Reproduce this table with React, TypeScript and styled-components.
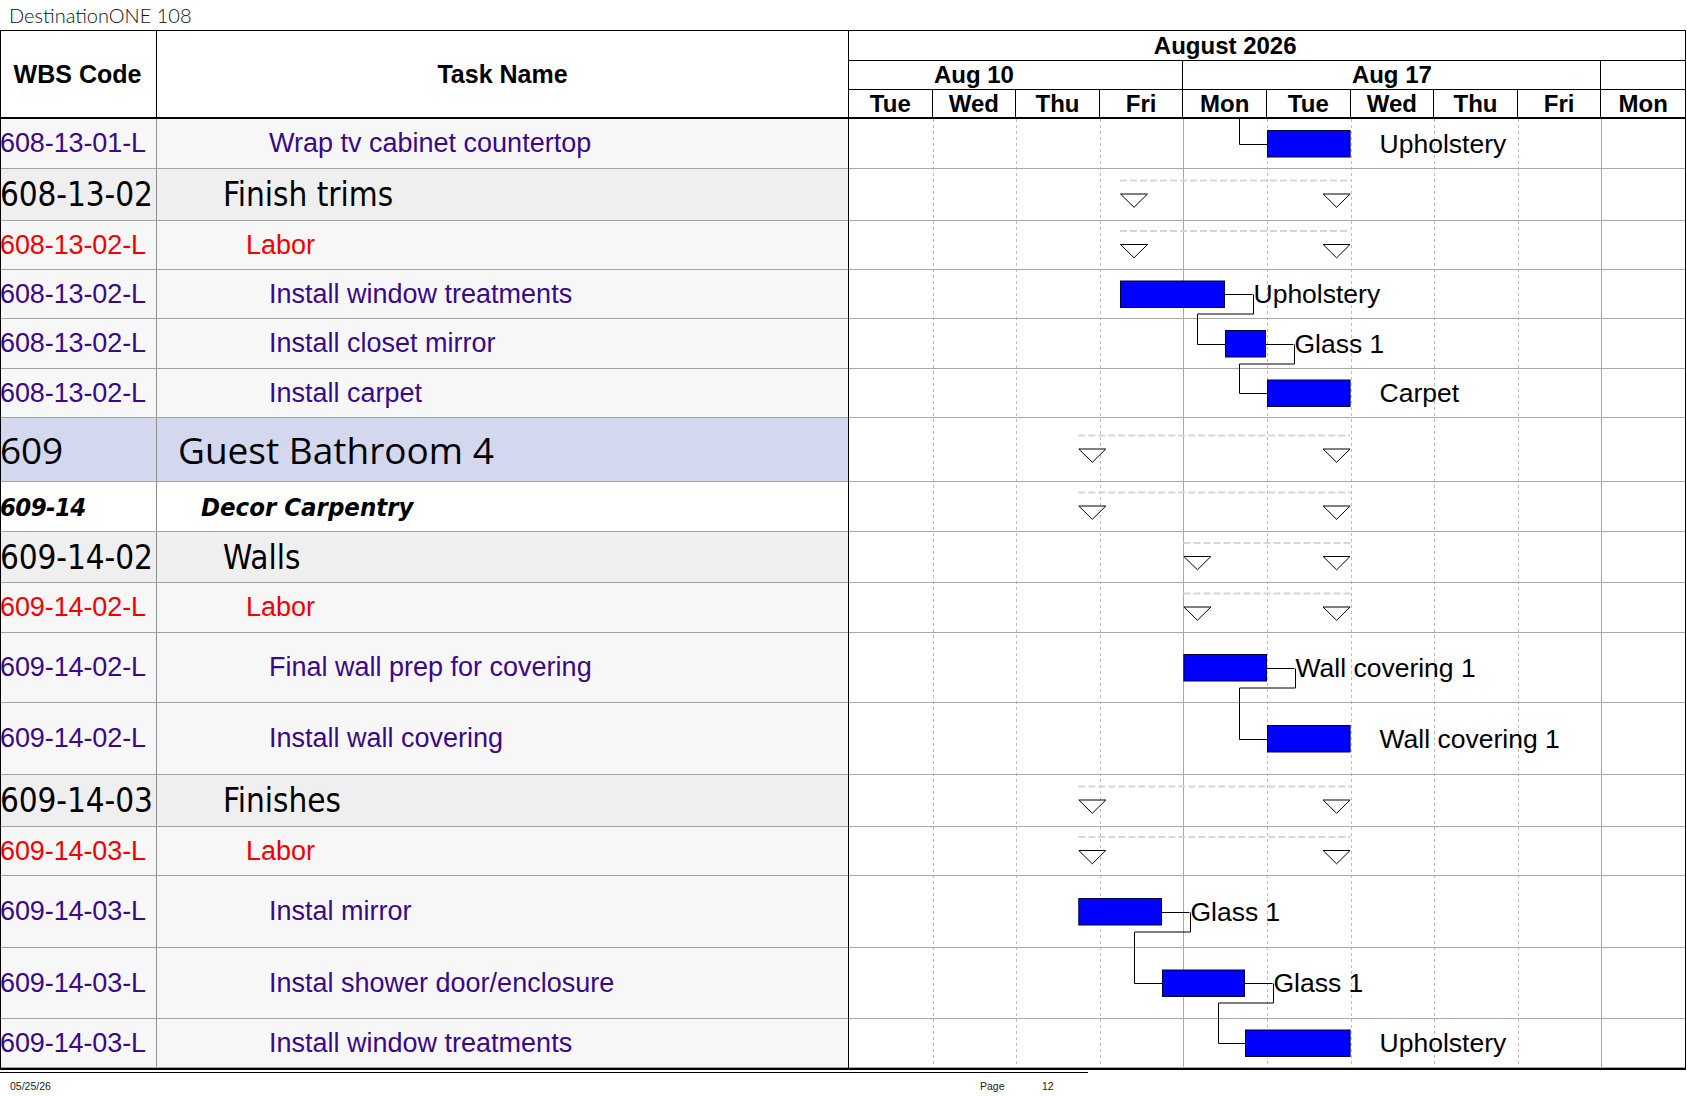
import styled, { createGlobalStyle } from 'styled-components';

type Kind = 'task' | 'labor' | 'summary' | 'group' | 'phase';

type Bar = { x1: number; x2: number; label: string; stub?: boolean };
type Span = { x1: number; x2: number };

type TaskRow = {
  code: string;
  name: string;
  kind: Kind;
  h: number;
  bar?: Bar;
  summary?: Span;
};

const DAY = 83.6;
const CHART_W = 836;

const rows: TaskRow[] = [
  { code: '608-13-01-L', name: 'Wrap tv cabinet countertop', kind: 'task', h: 50, bar: { x1: 418, x2: 501.6, label: 'Upholstery' } },
  { code: '608-13-02', name: 'Finish trims', kind: 'summary', h: 52, summary: { x1: 271, x2: 501.6 } },
  { code: '608-13-02-L', name: 'Labor', kind: 'labor', h: 49, summary: { x1: 271, x2: 501.6 } },
  { code: '608-13-02-L', name: 'Install window treatments', kind: 'task', h: 49, bar: { x1: 271, x2: 376, label: 'Upholstery', stub: true } },
  { code: '608-13-02-L', name: 'Install closet mirror', kind: 'task', h: 50, bar: { x1: 376, x2: 417, label: 'Glass 1', stub: true } },
  { code: '608-13-02-L', name: 'Install carpet', kind: 'task', h: 49, bar: { x1: 418, x2: 501.6, label: 'Carpet' } },
  { code: '609', name: 'Guest Bathroom 4', kind: 'group', h: 64, summary: { x1: 229.3, x2: 501.6 } },
  { code: '609-14', name: 'Decor Carpentry', kind: 'phase', h: 50, summary: { x1: 229.3, x2: 501.6 } },
  { code: '609-14-02', name: 'Walls', kind: 'summary', h: 51, summary: { x1: 334.4, x2: 501.6 } },
  { code: '609-14-02-L', name: 'Labor', kind: 'labor', h: 50, summary: { x1: 334.4, x2: 501.6 } },
  { code: '609-14-02-L', name: 'Final wall prep for covering', kind: 'task', h: 70, bar: { x1: 334.4, x2: 418, label: 'Wall covering 1', stub: true } },
  { code: '609-14-02-L', name: 'Install wall covering', kind: 'task', h: 72, bar: { x1: 418, x2: 501.6, label: 'Wall covering 1' } },
  { code: '609-14-03', name: 'Finishes', kind: 'summary', h: 52, summary: { x1: 229.3, x2: 501.6 } },
  { code: '609-14-03-L', name: 'Labor', kind: 'labor', h: 49, summary: { x1: 229.3, x2: 501.6 } },
  { code: '609-14-03-L', name: 'Instal mirror', kind: 'task', h: 72, bar: { x1: 229.3, x2: 313, label: 'Glass 1', stub: true } },
  { code: '609-14-03-L', name: 'Instal shower door/enclosure', kind: 'task', h: 71, bar: { x1: 313, x2: 396, label: 'Glass 1', stub: true } },
  { code: '609-14-03-L', name: 'Install window treatments', kind: 'task', h: 49, bar: { x1: 396, x2: 501.6, label: 'Upholstery' } },
];

// finish-to-start links between neighbouring rows, turnX is where the line doubles back
const links = [
  { from: 3, turnX: 348.3 },
  { from: 4, turnX: 390.3 },
  { from: 10, turnX: 390 },
  { from: 14, turnX: 285.3 },
  { from: 15, turnX: 369.3 },
];

const days = ['Tue', 'Wed', 'Thu', 'Fri', 'Mon', 'Tue', 'Wed', 'Thu', 'Fri', 'Mon'];

const kinds: Record<Kind, { bg: string; color: string; font: string; size: number; weight: number; italic: boolean; indent: number }> = {
  task: { bg: '#f7f7f7', color: '#3a0888', font: '"Liberation Sans", Arial, sans-serif', size: 27, weight: 400, italic: false, indent: 112 },
  labor: { bg: '#f7f7f7', color: '#f00000', font: '"Liberation Sans", Arial, sans-serif', size: 27, weight: 400, italic: false, indent: 89 },
  summary: { bg: '#efefef', color: '#000', font: '"DejaVu Sans Condensed", "Noto Sans", sans-serif', size: 33, weight: 400, italic: false, indent: 66 },
  group: { bg: '#d3d8ef', color: '#000', font: '"Open Sans", "Noto Sans", sans-serif', size: 37, weight: 400, italic: false, indent: 21 },
  phase: { bg: '#ffffff', color: '#000', font: '"DejaVu Sans Condensed", "Noto Sans", sans-serif', size: 25.5, weight: 700, italic: true, indent: 44 },
};

export default function App() {
  const tops: number[] = [];
  let acc = 0;
  for (const r of rows) {
    tops.push(acc);
    acc += r.h;
  }
  const totalH = acc;
  const mid = (i: number) => tops[i] + (rows[i].h - 1) / 2;

  return (
    <Page>
      <GlobalStyle />
      <Title>DestinationONE 108</Title>
      <Sheet>
        <Header>
          <HeadCell>WBS Code</HeadCell>
          <HeadCell $wide>Task Name</HeadCell>
          <GanttHead>
            <MonthBand>August 2026</MonthBand>
            <WeekBand>
              <WeekCell $span={4} $shift={DAY}>Aug 10</WeekCell>
              <WeekCell $span={5}>Aug 17</WeekCell>
              <WeekCell $span={1} $last />
            </WeekBand>
            <DayBand>
              {days.map((d, i) => (
                <DayCell key={i} $last={i === days.length - 1}>
                  {d}
                </DayCell>
              ))}
            </DayBand>
          </GanttHead>
        </Header>

        <Body>
          <Table>
            {rows.map((r, i) => (
              <Row key={i} $h={r.h} $kind={r.kind}>
                <CodeCell $kind={r.kind}>{r.code}</CodeCell>
                <NameCell $kind={r.kind}>{r.name}</NameCell>
              </Row>
            ))}
          </Table>

          <Chart width={CHART_W} height={totalH} viewBox={`0 0 ${CHART_W} ${totalH}`}>
            {Array.from({ length: 9 }, (_, k) => {
              const i = k + 1;
              const x = Math.round(i * DAY) + 0.5;
              const week = i === 4 || i === 9;
              return (
                <line
                  key={`d${i}`}
                  x1={x}
                  x2={x}
                  y1={0}
                  y2={totalH}
                  stroke={week ? '#a9a9a9' : '#bdbdbd'}
                  strokeDasharray={week ? undefined : '3 3'}
                />
              );
            })}

            {rows.map((r, i) => (
              <line key={`r${i}`} x1={0} x2={CHART_W} y1={tops[i] + r.h - 0.5} y2={tops[i] + r.h - 0.5} stroke="#a9a9a9" />
            ))}

            {rows.map((r, i) => {
              const m = mid(i);
              if (r.summary) {
                const { x1, x2 } = r.summary;
                const t = m - 0.5;
                return (
                  <g key={`s${i}`}>
                    <line x1={x1} x2={x2} y1={m - 14} y2={m - 14} stroke="#d6d6d6" strokeWidth={2} strokeDasharray="7 3" />
                    <path d={`M${x1 + 0.5} ${t} L${x1 + 27.5} ${t} L${x1 + 14} ${t + 13.3} Z`} fill="#fff" stroke="#000" strokeWidth={1} />
                    <path d={`M${x2 - 27.5} ${t} L${x2 - 0.5} ${t} L${x2 - 14} ${t + 13.3} Z`} fill="#fff" stroke="#000" strokeWidth={1} />
                  </g>
                );
              }
              if (r.bar) {
                const { x1, x2, label, stub } = r.bar;
                const end = x2 + 27.5;
                return (
                  <g key={`b${i}`}>
                    <rect x={x1 + 0.5} y={m - 13} width={x2 - x1 - 1} height={26.5} fill="#0000ff" stroke="#00003a" strokeWidth={1} />
                    {stub && <line x1={x2} x2={end} y1={Math.round(m) + 0.5} y2={Math.round(m) + 0.5} stroke="#000" />}
                    <BarLabel x={stub ? end + 1 : x2 + 29} y={m + 9}>
                      {label}
                    </BarLabel>
                  </g>
                );
              }
              return null;
            })}

            {/* incoming link from the previous page section */}
            <path d={`M390.5 0 V${Math.round(mid(0)) + 0.5} H418`} fill="none" stroke="#000" />

            {links.map((l) => {
              const a = rows[l.from].bar!;
              const b = rows[l.from + 1].bar!;
              const ya = Math.round(mid(l.from)) + 0.5;
              const yb = Math.round(mid(l.from + 1)) + 0.5;
              const sx = Math.round(a.x2 + 27.5) + 0.5;
              const tx = Math.round(l.turnX) + 0.5;
              return (
                <path
                  key={`l${l.from}`}
                  d={`M${sx} ${ya} V${ya + 19.5} H${tx} V${yb} H${b.x1}`}
                  fill="none"
                  stroke="#000"
                />
              );
            })}
          </Chart>
        </Body>
      </Sheet>

      <Footer>
        <FooterCell $w={980} $pad={10}>05/25/26</FooterCell>
        <FooterCell $w={62}>Page</FooterCell>
        <FooterCell>12</FooterCell>
      </Footer>
    </Page>
  );
}

const GlobalStyle = createGlobalStyle`
  html, body {
    margin: 0;
    padding: 0;
    background: #ffffff;
  }
  body {
    font-family: "Liberation Sans", Arial, sans-serif;
  }
`;

const Page = styled.div`
  width: 1687px;
  background: #fff;
`;

const Title = styled.div`
  height: 30px;
  padding-left: 9px;
  font-family: Lato, "Noto Sans", sans-serif;
  font-weight: 300;
  font-size: 20px;
  line-height: 30px;
  color: #111;
  box-sizing: border-box;
`;

const Sheet = styled.section`
  width: 1686px;
  box-sizing: border-box;
  border: 1px solid #000;
  border-bottom-width: 2px;
`;

const Header = styled.div`
  display: grid;
  grid-template-columns: 156px 692px 836px;
  height: 88px;
  border-bottom: 2px solid #000;
  box-sizing: border-box;
`;

const HeadCell = styled.div<{ $wide?: boolean }>`
  display: flex;
  align-items: center;
  justify-content: center;
  border-right: 1px solid #000;
  font-family: "Liberation Sans", Arial, sans-serif;
  font-weight: 700;
  font-size: 25px;
  color: #000;
  padding-right: ${({ $wide }) => ($wide ? '0' : '2px')};
`;

const GanttHead = styled.div`
  display: grid;
  grid-template-rows: 30px 29px 27px;
  font-family: "Liberation Sans", Arial, sans-serif;
  font-weight: 700;
  font-size: 24px;
  color: #000;
`;

const MonthBand = styled.div`
  display: flex;
  align-items: center;
  justify-content: center;
  padding-right: ${DAY}px;
  border-bottom: 1px solid #000;
`;

const WeekBand = styled.div`
  display: grid;
  grid-template-columns: 4fr 5fr 1fr;
  border-bottom: 1px solid #000;
`;

const WeekCell = styled.div<{ $span: number; $shift?: number; $last?: boolean }>`
  display: flex;
  align-items: center;
  justify-content: center;
  padding-right: ${({ $shift }) => ($shift ? `${$shift}px` : '0')};
  border-right: ${({ $last }) => ($last ? 'none' : '1px solid #000')};
  overflow: hidden;
`;

const DayBand = styled.div`
  display: grid;
  grid-template-columns: repeat(10, 1fr);
`;

const DayCell = styled.div<{ $last?: boolean }>`
  display: flex;
  align-items: center;
  justify-content: center;
  border-right: ${({ $last }) => ($last ? 'none' : '1px solid #000')};
`;

const Body = styled.div`
  display: grid;
  grid-template-columns: 848px 836px;
`;

const Table = styled.div`
  display: flex;
  flex-direction: column;
  border-right: 1px solid #000;
`;

const Row = styled.div<{ $h: number; $kind: Kind }>`
  display: grid;
  grid-template-columns: 156px 1fr;
  height: ${({ $h }) => $h}px;
  box-sizing: border-box;
  border-bottom: 1px solid #a3a3a3;
  background: ${({ $kind }) => kinds[$kind].bg};
`;

const Cell = styled.div<{ $kind: Kind }>`
  display: flex;
  align-items: center;
  overflow: hidden;
  white-space: nowrap;
  color: ${({ $kind }) => kinds[$kind].color};
  font-family: ${({ $kind }) => kinds[$kind].font};
  font-size: ${({ $kind }) => kinds[$kind].size}px;
  font-weight: ${({ $kind }) => kinds[$kind].weight};
  font-style: ${({ $kind }) => (kinds[$kind].italic ? 'italic' : 'normal')};
`;

const CodeCell = styled(Cell)`
  border-right: 1px solid #8f8f8f;
  margin-left: -1px;
  letter-spacing: ${({ $kind }) => ($kind === 'phase' ? '-0.6px' : '-0.1px')};
`;

const NameCell = styled(Cell)`
  padding-left: ${({ $kind }) => kinds[$kind].indent}px;
`;

const Chart = styled.svg`
  display: block;
  background: #fff;
`;

const BarLabel = styled.text`
  font-family: "Liberation Sans", Arial, sans-serif;
  font-size: 26.5px;
  fill: #000;
`;

const Footer = styled.footer`
  display: flex;
  width: 1088px;
  margin-top: 2px;
  border-top: 1px solid #000;
  height: 26px;
  align-items: center;
`;

const FooterCell = styled.span<{ $w?: number; $pad?: number }>`
  width: ${({ $w }) => ($w ? `${$w}px` : 'auto')};
  padding-left: ${({ $pad }) => ($pad ? `${$pad}px` : '0')};
  box-sizing: border-box;
  font-family: "Liberation Sans", Arial, sans-serif;
  font-size: 10.5px;
  color: #222;
`;
